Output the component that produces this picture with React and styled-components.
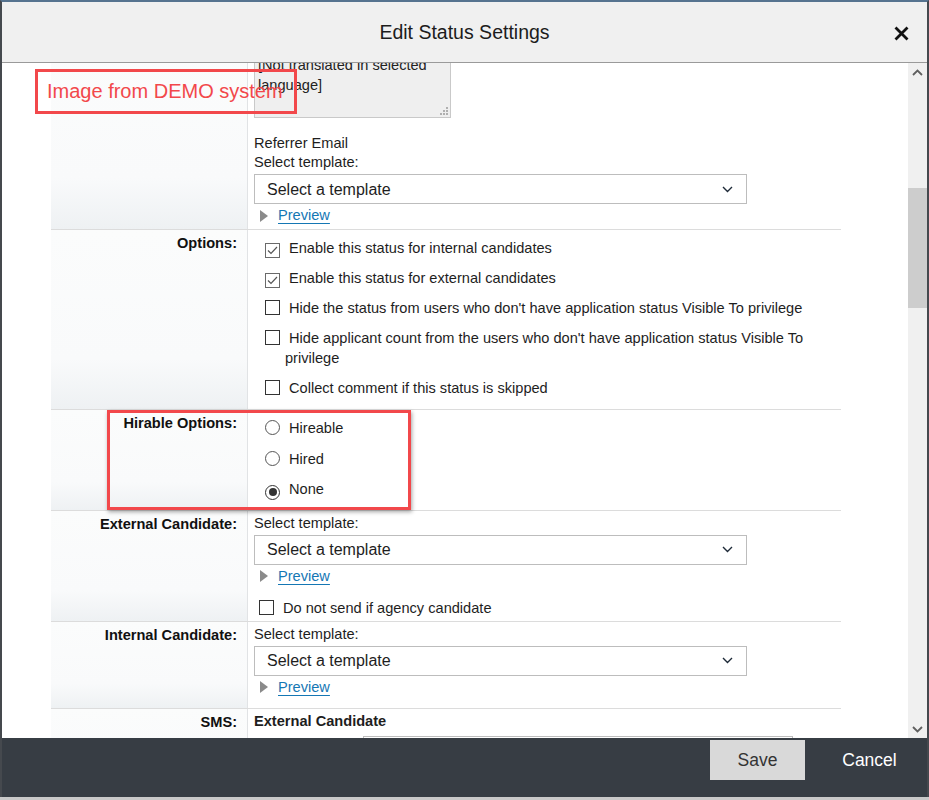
import React, { useLayoutEffect, useRef } from "react";
import styled, { createGlobalStyle } from "styled-components";

const Global = createGlobalStyle`
  html, body { margin: 0; padding: 0; background: #cfcfcf; }
  body { font-family: "Liberation Sans", Arial, sans-serif; }
  * { box-sizing: border-box; }
`;

const Page = styled.div`
  position: relative;
  width: 929px;
  height: 800px;
  overflow: hidden;
  background: #c9c9c9;
`;

const Dialog = styled.div`
  width: 929px;
  height: 797px;
  display: flex;
  flex-direction: column;
  border-top: 2px solid #56738f;
  border-left: 2px solid #45494e;
  border-right: 2px solid #45494e;
  background: #fff;
`;

const Header = styled.header`
  height: 61px;
  flex: none;
  display: flex;
  align-items: center;
  justify-content: center;
  position: relative;
  background: #f0f0f0;
  border-bottom: 1px solid #9a9a9a;
`;

const Title = styled.h1`
  margin: 0;
  font-weight: normal;
  font-size: 19.5px;
  color: #1c1c1c;
  letter-spacing: 0;
`;

const CloseButton = styled.button`
  position: absolute;
  right: 17px;
  top: 22px;
  width: 18px;
  height: 18px;
  padding: 0;
  border: 0;
  background: transparent;
  display: flex;
  align-items: center;
  justify-content: center;
`;

const Body = styled.div`
  flex: 1;
  display: flex;
  min-height: 0;
`;

const ScrollArea = styled.div`
  flex: 1;
  overflow: hidden;
  padding-left: 49px;
`;

const Table = styled.div`
  width: 790px;
  display: flex;
  flex-direction: column;
`;

const Row = styled.div`
  display: grid;
  grid-template-columns: 197px 1fr;
  border-bottom: 1px solid #dcdcdc;
`;

const LabelCell = styled.div`
  border-right: 1px solid #e1e3e5;
  background: linear-gradient(to bottom, #fbfcfc 0%, #f9fafb 72%, #eef1f3 100%);
  padding: 4px 10px 0 0;
  text-align: right;
  font-weight: bold;
  font-size: 14.6px;
  line-height: 19px;
  color: #111;
`;

const ValueCell = styled.div`
  padding: ${(p) => p.$pad || "3px 0 4px 6px"};
  font-size: 14.6px;
  line-height: 19px;
  color: #1e1e1e;
`;

const Line = styled.div`
  margin-top: ${(p) => p.$mt || 0}px;
  font-weight: ${(p) => (p.$bold ? "bold" : "normal")};
`;

const TextArea = styled.div`
  position: relative;
  width: 197px;
  height: 66px;
  background: #efefef;
  border: 1px solid #c9c9c9;
  padding: 2px 3px 0;
  line-height: 20px;
  color: #222;
`;

const Grip = styled.svg`
  position: absolute;
  right: 2px;
  bottom: 2px;
`;

const SelectBox = styled.div`
  margin-top: 2px;
  width: 493px;
  height: 30px;
  border: 1px solid #bdbdbd;
  background: #fff;
  display: flex;
  align-items: center;
  justify-content: space-between;
  padding: 0 13px 0 12px;
  font-size: 16px;
  color: #1e1e1e;
`;

const PreviewRow = styled.div`
  margin-top: 2px;
  display: flex;
  align-items: center;
  height: 19px;
  padding-left: 6px;
`;

const Triangle = styled.span`
  width: 0;
  height: 0;
  border-top: 6px solid transparent;
  border-bottom: 6px solid transparent;
  border-left: 8px solid #8a8a8a;
  margin-right: 10px;
`;

const Link = styled.a`
  color: #1577b4;
  text-decoration: underline;
  text-underline-offset: 3px;
  cursor: pointer;
`;

const OptionList = styled.div`
  display: flex;
  flex-direction: column;
  gap: ${(p) => p.$gap || 10}px;
`;

const OptionItem = styled.div`
  padding-left: ${(p) => p.$indent ?? 31}px;
  text-indent: -20px;
  line-height: 20px;
  color: #1e1e1e;
`;

const CheckBox = styled.span`
  display: inline-flex;
  align-items: center;
  justify-content: center;
  text-indent: 0;
  width: 15px;
  height: 15px;
  border: 1px solid ${(p) => (p.$checked ? "#6a6a6a" : "#333")};
  background: #fff;
  vertical-align: -2px;
  margin-right: 9px;
`;

const Radio = styled.span`
  display: inline-flex;
  align-items: center;
  justify-content: center;
  text-indent: 0;
  width: 15px;
  height: 15px;
  border-radius: 50%;
  border: 1px solid ${(p) => (p.$checked ? "#333" : "#555")};
  background: #fff;
  vertical-align: -2px;
  margin-right: 9px;
  &::after {
    content: "";
    display: ${(p) => (p.$checked ? "block" : "none")};
    width: 8px;
    height: 8px;
    border-radius: 50%;
    background: #333;
  }
`;

const SmsInput = styled.div`
  margin: 5px 0 0 109px;
  width: 430px;
  height: 30px;
  border: 1px solid #bdbdbd;
`;

const ScrollBar = styled.div`
  width: 19px;
  flex: none;
  background: #f0f0f0;
  display: flex;
  flex-direction: column;
`;

const ScrollButton = styled.div`
  height: 18px;
  display: flex;
  align-items: center;
  justify-content: center;
  flex: none;
`;

const Track = styled.div`
  flex: 1;
`;

const Thumb = styled.div`
  margin-top: ${(p) => p.$offset}px;
  height: ${(p) => p.$size}px;
  background: #cdcdcd;
`;

const Footer = styled.footer`
  height: 59px;
  flex: none;
  background: #373d44;
  display: flex;
  justify-content: flex-end;
  align-items: flex-start;
  gap: 17px;
  padding: 2px 10px 0 0;
`;

const FooterButton = styled.button`
  width: 95px;
  height: 40px;
  border: 0;
  font-family: "Liberation Sans", Arial, sans-serif;
  font-size: 17.5px;
  background: ${(p) => (p.$primary ? "#d9d9d9" : "transparent")};
  color: ${(p) => (p.$primary ? "#333" : "#fff")};
`;

const Annotation = styled.div`
  position: absolute;
  left: ${(p) => p.$x}px;
  top: ${(p) => p.$y}px;
  width: ${(p) => p.$w}px;
  height: ${(p) => p.$h}px;
  border: 3px solid #f2484b;
  box-shadow: ${(p) => (p.$shadow ? "1px 2px 4px rgba(0,0,0,0.35)" : "none")};
  display: flex;
  align-items: center;
  padding-left: 9px;
  color: #f2484b;
  font-size: 20px;
  pointer-events: none;
`;

const Chevron = ({ up }) => (
  <svg width="11" height="7" viewBox="0 0 11 7">
    <polyline
      points={up ? "1,6 5.5,1.5 10,6" : "1,1 5.5,5.5 10,1"}
      fill="none"
      stroke="#5f5f5f"
      strokeWidth="1.8"
    />
  </svg>
);

const SelectChevron = () => (
  <svg width="11" height="7" viewBox="0 0 11 7">
    <polyline points="1,1 5.5,5.5 10,1" fill="none" stroke="#1e2a38" strokeWidth="1.4" />
  </svg>
);

const Check = ({ checked }) => (
  <CheckBox $checked={checked}>
    {checked && (
      <svg width="11" height="9" viewBox="0 0 11 9">
        <polyline points="1,4.5 4,7.5 10,1" fill="none" stroke="#555" strokeWidth="1.2" />
      </svg>
    )}
  </CheckBox>
);

const TemplateSelect = () => (
  <SelectBox>
    <span>Select a template</span>
    <SelectChevron />
  </SelectBox>
);

const Preview = () => (
  <PreviewRow>
    <Triangle />
    <Link>Preview</Link>
  </PreviewRow>
);

const options = [
  { text: "Enable this status for internal candidates", checked: true },
  { text: "Enable this status for external candidates", checked: true },
  { text: "Hide the status from users who don't have application status Visible To privilege", checked: false },
  { text: "Hide applicant count from the users who don't have application status Visible To privilege", checked: false },
  { text: "Collect comment if this status is skipped", checked: false },
];

const hirable = [
  { text: "Hireable", checked: false },
  { text: "Hired", checked: false },
  { text: "None", checked: true },
];

export default function App() {
  const scrollRef = useRef(null);
  useLayoutEffect(() => {
    if (scrollRef.current) scrollRef.current.scrollTop = 17;
  }, []);

  return (
    <Page>
      <Global />
      <Dialog>
        <Header>
          <Title>Edit Status Settings</Title>
          <CloseButton aria-label="Close">
            <svg width="15" height="15" viewBox="0 0 15 15">
              <path d="M1.5 1.5 L13.5 13.5 M13.5 1.5 L1.5 13.5" stroke="#111" strokeWidth="2.8" />
            </svg>
          </CloseButton>
        </Header>
        <Body>
          <ScrollArea ref={scrollRef}>
            <Table>
              <Row>
                <LabelCell />
                <ValueCell $pad="6px 0 4px 6px">
                  <TextArea>
                    [Not translated in selected language]
                    <Grip width="8" height="8" viewBox="0 0 8 8">
                      <rect x="6" y="0" width="2" height="2" fill="#b0b0b0" />
                      <rect x="3" y="3" width="2" height="2" fill="#b0b0b0" />
                      <rect x="6" y="3" width="2" height="2" fill="#b0b0b0" />
                      <rect x="0" y="6" width="2" height="2" fill="#b0b0b0" />
                      <rect x="3" y="6" width="2" height="2" fill="#b0b0b0" />
                      <rect x="6" y="6" width="2" height="2" fill="#b0b0b0" />
                    </Grip>
                  </TextArea>
                  <Line $mt={16}>Referrer Email</Line>
                  <Line>Select template:</Line>
                  <TemplateSelect />
                  <Preview />
                </ValueCell>
              </Row>

              <Row>
                <LabelCell>Options:</LabelCell>
                <ValueCell $pad="8px 0 11px 6px">
                  <OptionList>
                    {options.map((o) => (
                      <OptionItem key={o.text}>
                        <Check checked={o.checked} />
                        {o.text}
                      </OptionItem>
                    ))}
                  </OptionList>
                </ValueCell>
              </Row>

              <Row>
                <LabelCell>Hirable Options:</LabelCell>
                <ValueCell $pad="8px 0 10px 6px">
                  <OptionList $gap={10.5}>
                    {hirable.map((o) => (
                      <OptionItem key={o.text}>
                        <Radio $checked={o.checked} />
                        {o.text}
                      </OptionItem>
                    ))}
                  </OptionList>
                </ValueCell>
              </Row>

              <Row>
                <LabelCell>External Candidate:</LabelCell>
                <ValueCell $pad="3px 0 3px 6px">
                  <Line>Select template:</Line>
                  <TemplateSelect />
                  <Preview />
                  <Line $mt={12}>
                    <OptionItem $indent={25}>
                      <Check checked={false} />
                      Do not send if agency candidate
                    </OptionItem>
                  </Line>
                </ValueCell>
              </Row>

              <Row>
                <LabelCell>Internal Candidate:</LabelCell>
                <ValueCell $pad="3px 0 11px 6px">
                  <Line>Select template:</Line>
                  <TemplateSelect />
                  <Preview />
                </ValueCell>
              </Row>

              <Row>
                <LabelCell>SMS:</LabelCell>
                <ValueCell $pad="3px 0 30px 6px">
                  <Line $bold>External Candidate</Line>
                  <SmsInput />
                </ValueCell>
              </Row>
            </Table>
          </ScrollArea>
          <ScrollBar>
            <ScrollButton>
              <Chevron up />
            </ScrollButton>
            <Track>
              <Thumb $offset={107} $size={120} />
            </Track>
            <ScrollButton>
              <Chevron />
            </ScrollButton>
          </ScrollBar>
        </Body>
        <Footer>
          <FooterButton $primary>Save</FooterButton>
          <FooterButton>Cancel</FooterButton>
        </Footer>
      </Dialog>
      <Annotation $x={35} $y={69} $w={262} $h={45}>
        Image from DEMO system
      </Annotation>
      <Annotation $x={107} $y={410} $w={304} $h={100} $shadow />
    </Page>
  );
}
